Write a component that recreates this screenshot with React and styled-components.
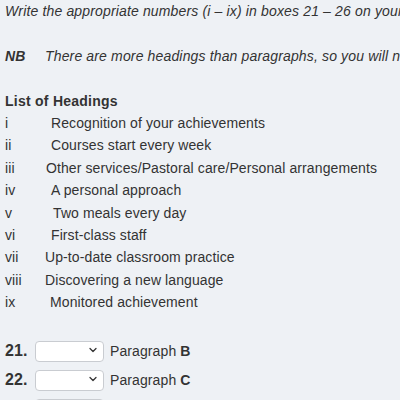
import React from "react";
import styled, { createGlobalStyle } from "styled-components";
import { ChevronDown } from "lucide-react";

const GlobalStyle = createGlobalStyle`
  html, body {
    margin: 0;
    padding: 0;
    background: #eef1f5;
    overflow: hidden;
  }
  body {
    width: 400px;
    height: 400px;
  }
`;

const Page = styled.div`
  padding: 0 0 0 5px;
  font-family: "Liberation Sans", Arial, sans-serif;
  font-size: 14px;
  line-height: 22.4px;
  letter-spacing: 0.1px;
  color: #333;
  white-space: nowrap;
`;

const Instruction = styled.p`
  margin: 0 0 22.4px;
  font-style: italic;
  letter-spacing: 0.15px;
`;

const NoteRow = styled.p`
  display: flex;
  margin: 0 0 22.4px;
  font-style: italic;
  letter-spacing: 0.15px;
`;

const NoteLabel = styled.b`
  width: 40px;
  flex: none;
  font-weight: 700;
`;

const ListTitle = styled.h3`
  margin: 0;
  font-size: 14px;
  font-weight: 700;
  line-height: 22.4px;
  letter-spacing: 0.25px;
`;

const HeadingList = styled.ul`
  list-style: none;
  margin: 0 0 23px;
  padding: 0;
`;

const HeadingItem = styled.li`
  display: flex;
`;

const Numeral = styled.span`
  flex: none;
  width: ${(p) => p.$w}px;
`;

const Questions = styled.div`
  display: flex;
  flex-direction: column;
`;

const QuestionRow = styled.div`
  display: flex;
  align-items: center;
  height: 29px;
`;

const QNumber = styled.span`
  width: 30px;
  flex: none;
  font-size: 16px;
  font-weight: 700;
`;

const SelectWrap = styled.span`
  position: relative;
  display: inline-flex;
  width: 69px;
  height: 21px;
  margin-right: 6px;
`;

const Select = styled.select`
  appearance: none;
  -webkit-appearance: none;
  width: 100%;
  height: 100%;
  box-sizing: border-box;
  border: 1px solid #c9ccd1;
  border-radius: 4px;
  background: #fff;
  font-family: inherit;
  font-size: 14px;
  padding: 0 20px 0 6px;
  color: #333;
  outline: none;
`;

const Chevron = styled(ChevronDown)`
  position: absolute;
  right: 5px;
  top: 3.5px;
  width: 12px;
  height: 12px;
  color: #333;
  pointer-events: none;
`;

const ParagraphLabel = styled.span`
  font-size: 14px;
  b {
    letter-spacing: 0.2px;
  }
`;

const headings = [
  ["i", 46, "Recognition of your achievements"],
  ["ii", 46, "Courses start every week"],
  ["iii", 41, "Other services/Pastoral care/Personal arrangements"],
  ["iv", 46, "A personal approach"],
  ["v", 48, "Two meals every day"],
  ["vi", 46, "First-class staff"],
  ["vii", 40, "Up-to-date classroom practice"],
  ["viii", 40, "Discovering a new language"],
  ["ix", 45, "Monitored achievement"],
];

const questions = [
  ["21.", "B"],
  ["22.", "C"],
  ["23.", "D"],
];

export default function App() {
  return (
    <>
      <GlobalStyle />
      <Page>
        <Instruction>
          Write the appropriate numbers (i – ix) in boxes 21 – 26 on your answer sheet.
        </Instruction>
        <NoteRow>
          <NoteLabel>NB</NoteLabel>
          <span>There are more headings than paragraphs, so you will not use them all.</span>
        </NoteRow>
        <ListTitle>List of Headings</ListTitle>
        <HeadingList>
          {headings.map(([n, w, t]) => (
            <HeadingItem key={n}>
              <Numeral $w={w}>{n}</Numeral>
              <span>{t}</span>
            </HeadingItem>
          ))}
        </HeadingList>
        <Questions>
          {questions.map(([q, p]) => (
            <QuestionRow key={q}>
              <QNumber>{q}</QNumber>
              <SelectWrap>
                <Select defaultValue="">
                  <option value=""></option>
                  {headings.map(([n]) => (
                    <option key={n} value={n}>{n}</option>
                  ))}
                </Select>
                <Chevron strokeWidth={2.5} />
              </SelectWrap>
              <ParagraphLabel>
                Paragraph <b>{p}</b>
              </ParagraphLabel>
            </QuestionRow>
          ))}
        </Questions>
      </Page>
    </>
  );
}
